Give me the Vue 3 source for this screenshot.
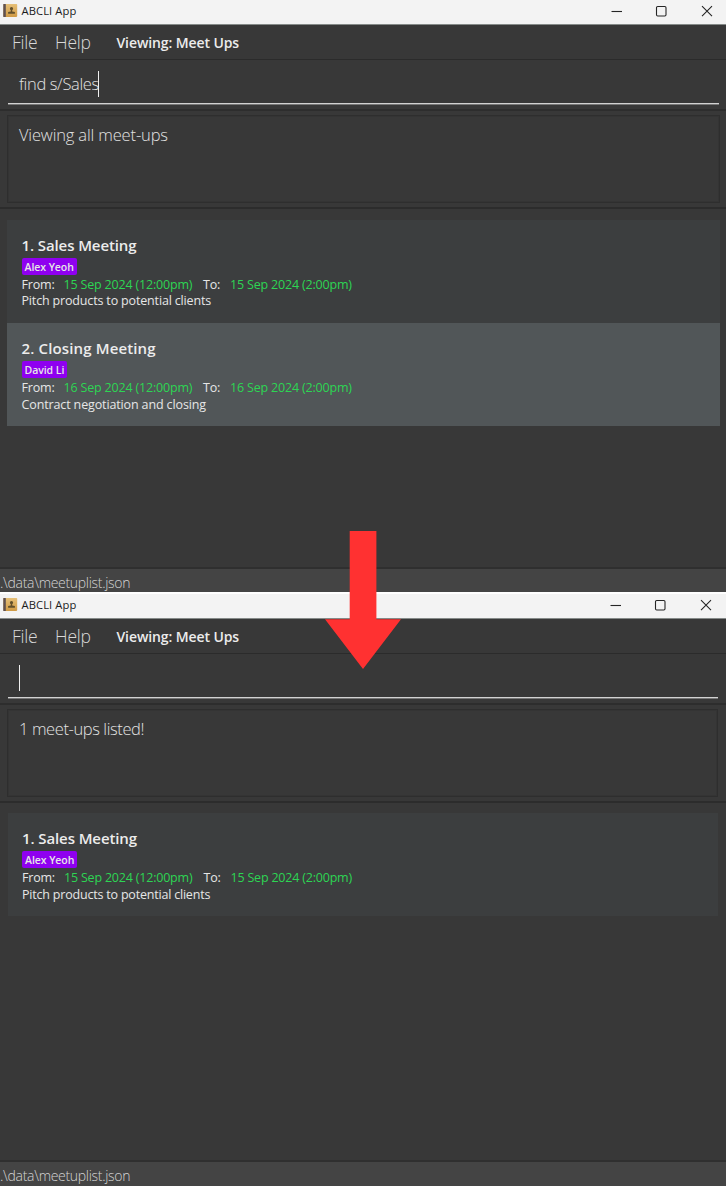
<script setup>
const sales = {
  id: 'sales',
  title: '1. Sales Meeting',
  contact: 'Alex Yeoh',
  from: '15 Sep 2024 (12:00pm)',
  to: '15 Sep 2024 (2:00pm)',
  info: 'Pitch products to potential clients',
}
const closing = {
  id: 'closing',
  title: '2. Closing Meeting',
  contact: 'David Li',
  from: '16 Sep 2024 (12:00pm)',
  to: '16 Sep 2024 (2:00pm)',
  info: 'Contract negotiation and closing',
}
const windows = [
  { id: 'before', command: 'find s/Sales', result: 'Viewing all meet-ups', meetups: [sales, closing] },
  { id: 'after', command: '', result: '1 meet-ups listed!', meetups: [sales] },
]
</script>

<template>
  <main class="stage">
    <section v-for="w in windows" :key="w.id" class="window" :class="w.id">
      <header class="titlebar">
        <svg class="book" viewBox="0 0 15 15">
          <defs>
            <linearGradient :id="'cover-' + w.id" x1="0" y1="0" x2="0" y2="1">
              <stop offset="0" stop-color="#e6c078" />
              <stop offset="1" stop-color="#cf9a45" />
            </linearGradient>
          </defs>
          <rect x="0.3" y="0.9" width="13.9" height="13" rx="0.8" :fill="'url(#cover-' + w.id + ')'" />
          <rect x="0.3" y="0.9" width="2.5" height="13" rx="0.5" fill="#5e5050" />
          <path d="M8.5 3.9a1.6 1.6 0 0 1 1.6 1.7c0 .8-.5 1.300-.9 1.700v1.200l2.700.6v1.700H5.100V9.100l2.700-.6V7.300c-.4-.4-.9-.9-.9-1.700a1.600 1.600 0 0 1 1.600-1.700z" fill="#62502c" />
        </svg>
        <span class="app-name">ABCLI App</span>
        <svg class="controls" viewBox="0 0 100 12" fill="none" stroke="#252525" stroke-width="1.1">
          <path d="M0.5 6.500h10.500" />
          <rect x="45.5" y="1.500" width="9.500" height="9.500" rx="1.200" />
          <path d="M91 1.200l10 10M101 1.200l-10 10" />
        </svg>
      </header>
      <nav class="menubar">
        <span class="file">File</span>
        <span class="help">Help</span>
        <strong class="viewing">Viewing: Meet Ups</strong>
      </nav>
      <div class="command">
        <div class="field"><span class="typed">{{ w.command }}</span><i class="caret"></i></div>
      </div>
      <div class="result">
        <div class="result-box"><span class="message">{{ w.result }}</span></div>
      </div>
      <div class="list">
        <article v-for="m in w.meetups" :key="m.title" class="card" :class="m.id">
          <h2>{{ m.title }}</h2>
          <span class="tag"><span>{{ m.contact }}</span></span>
          <div class="times">
            <span class="from">From:</span><span class="date start">{{ m.from }}</span>
            <span class="to">To:</span><span class="date">{{ m.to }}</span>
          </div>
          <p>{{ m.info }}</p>
        </article>
      </div>
      <footer class="status"><span>.\data\meetuplist.json</span></footer>
    </section>
    <svg class="arrow" viewBox="0 0 76 138">
      <path d="M24.7 0h26.7v88.200H76L38 138 0 88.200h24.700z" fill="#ff3131" />
    </svg>
  </main>
</template>

<style>
body { margin: 0; background: #383838; }
</style>

<style scoped>
* { box-sizing: border-box; }
.stage {
  position: relative;
  width: 726px;
  height: 1186px;
  overflow: hidden;
  font-family: "Open Sans", "Noto Sans", sans-serif;
  color: #e6e6e6;
}
span, strong, h2, p { white-space: nowrap; }
.window { display: flex; flex-direction: column; background: #383838; }
.before { height: 592px; }
.after { height: 594px; border-top: 2px solid #fff; }

.titlebar {
  display: flex;
  align-items: center;
  flex: none;
  height: 25px;
  padding: 0 18px 3px 3px;
  background: #f3f3f3;
  border-bottom: 1px solid #858a88;
}
.book { width: 15px; height: 15px; margin-right: 3.5px; }
.app-name { color: #1c1c1c; font-size: 11.2px; line-height: 20px; letter-spacing: 0.1px; }
.controls { width: 100px; height: 12px; margin-left: auto; margin-right: -3px; overflow: visible; }
.after .controls { margin-right: -2px; }

.menubar {
  display: flex;
  align-items: center;
  flex: none;
  height: 35px;
  padding: 0 0 1px 12px;
  border-bottom: 1px solid #2b2b2b;
}
.file, .help { font-size: 17.5px; font-weight: 300; color: #d8d8d8; letter-spacing: -0.2px; }
.file { width: 43px; }
.help { width: 61.5px; }
.viewing { padding-top: 1px; font-size: 14px; font-weight: 600; letter-spacing: -0.1px; color: #ececec; }

.command { flex: none; height: 51px; padding: 6px 7px 0 8px; border-bottom: 2px solid #2d2d2d; }
.field {
  display: flex;
  align-items: center;
  height: 38px;
  padding: 0 0 1px 11px;
  border-bottom: 1px solid #d2d2d2;
  box-shadow: 0 1px #777;
}
.typed { padding-bottom: 2px; font-size: 16.5px; font-weight: 300; color: #e2e2e2; letter-spacing: -0.35px; }
.caret { width: 1px; height: 26px; background: #f0f0f0; }
.before .caret { margin-left: -1px; }

.result { flex: none; height: 98px; padding: 4px 6px 0 7px; border-bottom: 2px solid #2c2c2c; }
.result-box {
  height: 88px;
  padding: 8px 11px;
  border: 1px solid #2e2e2e;
  box-shadow: inset 0 0 0 1px #343434;
}
.message { display: block; font-size: 16.5px; line-height: 22px; font-weight: 300; color: #e2e2e2; letter-spacing: -0.15px; }
.after .message { letter-spacing: -0.4px; }

.list { flex: 1; padding: 11px 6px 0 7px; }
.card {
  height: 103px;
  padding: 14px 0 0 14.5px;
  background: #3c3e3f;
}
.card.closing { background: #515658; }
h2 { margin: 0; font-size: 15px; line-height: 22px; font-weight: 600; color: #ececec; letter-spacing: -0.1px; }
.closing h2 { letter-spacing: 0.14px; }
.tag {
  display: flex;
  align-items: center;
  width: max-content;
  height: 17px;
  margin: 2px 0 1px;
  padding: 0 3px;
  border-radius: 2px;
  background: #8f00f0;
  font-size: 10.5px;
  font-weight: 600;
  letter-spacing: -0.05px;
}
.times { display: flex; height: 16px; font-size: 12.5px; line-height: 17px; letter-spacing: -0.18px; }
.from { width: 42px; }
.to { width: 27px; }
.date { color: #2dd553; }
.start { width: 139.5px; }
p { margin: 0; font-size: 12.5px; line-height: 17px; letter-spacing: -0.16px; }
.closing p { padding-top: 1px; letter-spacing: -0.13px; }

.status {
  flex: none;
  height: 25px;
  border-top: 2px solid #2f2f2f;
  background: #444;
  font-size: 14px;
  line-height: 27px;
  font-weight: 300;
  letter-spacing: -0.3px;
  color: #d4d4d4;
  overflow: hidden;
}
.after .status { height: 26px; }
.after .field { width: 710px; }
.after .result { padding-right: 8px; }
.after .list { padding: 10px 8px 0 8px; }
.after .card { padding-left: 14px; }
.after .times, .after p { letter-spacing: -0.2px; }
.after p { padding-top: 1px; }

.arrow { position: absolute; left: 325px; top: 531px; width: 76px; height: 138px; }
</style>
